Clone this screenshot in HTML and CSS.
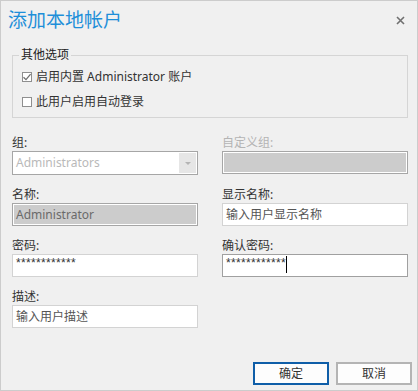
FILE: index.html
```html
<!DOCTYPE html>
<html lang="zh-CN">
  <head>
    <meta charset="UTF-8" />
    <title>添加本地帐户</title>
    <link rel="stylesheet" href="styles.css">
  </head>
  <body>
    <div class="dialog">
      <div class="header">
        <h1 class="title">添加本地帐户</h1>
        <span class="close">
          <svg width="9" height="9" viewBox="0 0 9 9">
            <path d="M1 1L8 8M8 1L1 8" stroke="#707070" stroke-width="1.6" fill="none" />
          </svg>
        </span>
      </div>

      <fieldset class="options">
        <legend>其他选项</legend>
        <div class="checkRow">
          <span class="check">
            <svg width="10" height="10" viewBox="0 0 10 10">
              <path d="M1.5 5.2L4 7.6L8.6 2.2" stroke="#6f6f6f" stroke-width="1.3" fill="none" />
            </svg>
          </span>
          <span>启用内置 Administrator 账户</span>
        </div>
        <div class="checkRow">
          <span class="check"></span>
          <span>此用户启用自动登录</span>
        </div>
      </fieldset>

      <div class="fields">
        <div class="field">
          <span class="label">组:</span>
          <div class="select">
            <span class="selectText">Administrators</span>
            <span class="arrow"></span>
          </div>
        </div>
        <div class="field">
          <span class="label disabled">自定义组:</span>
          <div class="box readonly"></div>
        </div>
        <div class="field">
          <span class="label">名称:</span>
          <div class="box readonly">Administrator</div>
        </div>
        <div class="field">
          <span class="label">显示名称:</span>
          <div class="box">输入用户显示名称</div>
        </div>
        <div class="field">
          <span class="label">密码:</span>
          <div class="box secret">************</div>
        </div>
        <div class="field">
          <span class="label">确认密码:</span>
          <div class="box secret focused">************<span class="caret"></span></div>
        </div>
        <div class="field">
          <span class="label">描述:</span>
          <div class="box">输入用户描述</div>
        </div>
      </div>

      <div class="footer">
        <button class="btn primary">确定</button>
        <button class="btn">取消</button>
      </div>
    </div>
  </body>
</html>
```

FILE: styles.css
```css
body {
  margin: 0;
  background-color: #f0f0f0;
  font-family: "Noto Sans", "Noto Sans CJK SC", sans-serif;
  font-size: 12px;
  color: #333333;
}
.dialog {
  width: 418px;
  height: 391px;
  box-sizing: border-box;
  border: 1px solid #cccccc;
  background-color: #f0f0f0;
  display: flex;
  flex-direction: column;
}
.header {
  display: flex;
  align-items: center;
  justify-content: space-between;
  padding: 5px 9px 0 7px;
  height: 27px;
}
.title {
  margin: 0;
  font-size: 19px;
  font-weight: normal;
  line-height: 26px;
  color: #1e8fd9;
}
.close {
  width: 16px;
  display: flex;
  justify-content: center;
  margin-top: 1px;
}
.options {
  margin: 15px 9px 0 11px;
  padding: 0 9px 7px 9px;
  border: 1px solid #d5d5d5;
}
.options > legend {
  padding: 0 2px;
  margin-left: -3px;
  line-height: 14px;
  color: #222222;
}
.checkRow {
  display: flex;
  align-items: center;
  gap: 4px;
  height: 16px;
  line-height: 16px;
  margin-top: 7px;
}
.checkRow + .checkRow {
  margin-top: 9px;
}
.check {
  width: 10px;
  height: 10px;
  box-sizing: border-box;
  border: 1px solid #8f8f8f;
  background-color: #ffffff;
  display: flex;
  align-items: center;
  justify-content: center;
}
.check > svg {
  flex-shrink: 0;
}
.fields {
  margin: 17px 9px 0 11px;
  display: grid;
  grid-template-columns: 186px 186px;
  column-gap: 24px;
  row-gap: 12px;
}
.field {
  display: flex;
  flex-direction: column;
}
.label {
  line-height: 16px;
  height: 16px;
}
.label.disabled {
  color: #b4b4b4;
}
.select {
  height: 24px;
  box-sizing: border-box;
  border: 1px solid #a6a6a6;
  background-color: #ffffff;
  display: flex;
  align-items: center;
  padding: 1px;
}
.selectText {
  flex-grow: 1;
  padding-left: 2px;
  color: #b9b9b9;
  line-height: 20px;
}
.arrow {
  width: 17px;
  height: 20px;
  background-color: #e6e6e6;
  position: relative;
}
.arrow::after {
  content: "";
  position: absolute;
  left: 6px;
  top: 9px;
  border-left: 3px solid transparent;
  border-right: 3px solid transparent;
  border-top: 3px solid #b4b4b4;
}
.box {
  height: 23px;
  box-sizing: border-box;
  border: 1px solid #d3d3d3;
  background-color: #ffffff;
  padding: 0 3px;
  line-height: 21px;
  color: #555555;
  white-space: nowrap;
  display: flex;
  align-items: center;
}
.box.readonly {
  border-color: #a6a6a6;
  background-color: #cccccc;
  box-shadow: inset 0 0 0 1px #ffffff;
  color: #6a6a6a;
}
.box.secret {
  font-family: "Liberation Sans", sans-serif;
  letter-spacing: 0.33px;
  color: #333333;
  align-items: flex-start;
  line-height: 16px;
}
.box.focused {
  border-color: #a0a0a0;
}
.caret {
  width: 1px;
  height: 17px;
  margin-top: 1px;
  background-color: #000000;
}
.footer {
  margin-top: auto;
  display: flex;
  justify-content: flex-end;
  gap: 7px;
  padding: 0 5px 5px 0;
}
.btn {
  width: 76px;
  height: 23px;
  box-sizing: border-box;
  border: 2px solid #b4b4b4;
  background-color: #fdfdfd;
  font-family: "Noto Sans", "Noto Sans CJK SC", sans-serif;
  font-size: 12px;
  line-height: 17px;
  color: #333333;
  padding: 0;
}
.btn.primary {
  border-color: #0f5ea8;
}
```
